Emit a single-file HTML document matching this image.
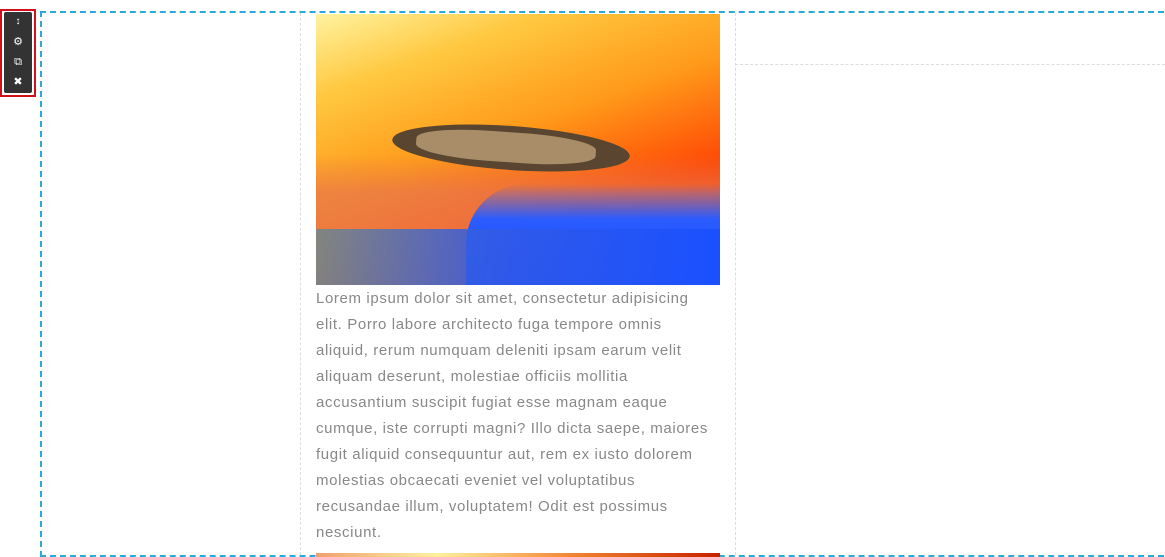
<!DOCTYPE html>
<html><head><style>
body{margin:0;width:1165px;height:557px;overflow:hidden;background:#fff;position:relative;font-family:"Liberation Sans",sans-serif}
.abs{position:absolute}
</style></head><body>
<div class="abs" style="left:0;top:9px;width:32px;height:84px;border:2px solid #d0111b"></div>
<div class="abs" style="left:4px;top:12px;width:28px;height:81px;background:#333;border-radius:2px;color:#fff;font-size:11px;text-align:center;line-height:20px">
<div style="font-size:10px">&#x2195;</div><div>&#9881;</div><div>&#10697;</div><div>&#10006;</div></div>
<div class="abs" style="left:40px;top:11px;width:1130px;height:542px;border:2px dashed #2aaad8"></div>
<div class="abs" style="left:300px;top:13px;width:434px;height:542px;border-left:1px dashed #ddd;border-right:1px dashed #ddd"></div>
<div class="abs" style="left:735px;top:64px;width:430px;border-top:1px dashed #ddd"></div>
<div class="abs" style="left:316px;top:14px;width:404px;height:271px;overflow:hidden;background:linear-gradient(160deg,#fff3a0 0%,#ffc840 20%,#ff9a1a 45%,#ff4a05 70%,#e62000 100%)">
<div class="abs" style="left:0;top:140px;width:404px;height:131px;background:linear-gradient(180deg,rgba(255,150,60,0) 0%,rgba(230,120,80,.7) 30%,rgba(230,120,80,.7) 100%)"></div>
<div class="abs" style="left:150px;top:170px;width:254px;height:101px;background:linear-gradient(180deg,rgba(40,80,255,0),#2a5cff 35%,#1c48ff);border-radius:60px 0 0 0"></div>
<div class="abs" style="left:0;top:215px;width:404px;height:56px;background:linear-gradient(90deg,rgba(60,140,170,.6),rgba(50,90,230,.9) 45%,#1a50ff)"></div>
<div class="abs" style="left:76px;top:112px;width:238px;height:44px;background:#5a4630;border-radius:50%;transform:rotate(4deg)"></div>
<div class="abs" style="left:100px;top:118px;width:180px;height:30px;background:#a88d68;border-radius:40%;transform:rotate(4deg)"></div>
</div>
<div class="abs" style="left:316px;top:286px;white-space:nowrap;font-size:15px;letter-spacing:0.62px;line-height:26px;color:#888">Lorem ipsum dolor sit amet, consectetur adipisicing<br>elit. Porro labore architecto fuga tempore omnis<br>aliquid, rerum numquam deleniti ipsam earum velit<br>aliquam deserunt, molestiae officiis mollitia<br>accusantium suscipit fugiat esse magnam eaque<br>cumque, iste corrupti magni? Illo dicta saepe, maiores<br>fugit aliquid consequuntur aut, rem ex iusto dolorem<br>molestias obcaecati eveniet vel voluptatibus<br>recusandae illum, voluptatem! Odit est possimus<br>nesciunt.</div>
<div class="abs" style="left:316px;top:553px;width:404px;height:4px;background:linear-gradient(90deg,#f0a070,#fff0a0 30%,#f08030 65%,#c82000)"></div>
</body></html>
